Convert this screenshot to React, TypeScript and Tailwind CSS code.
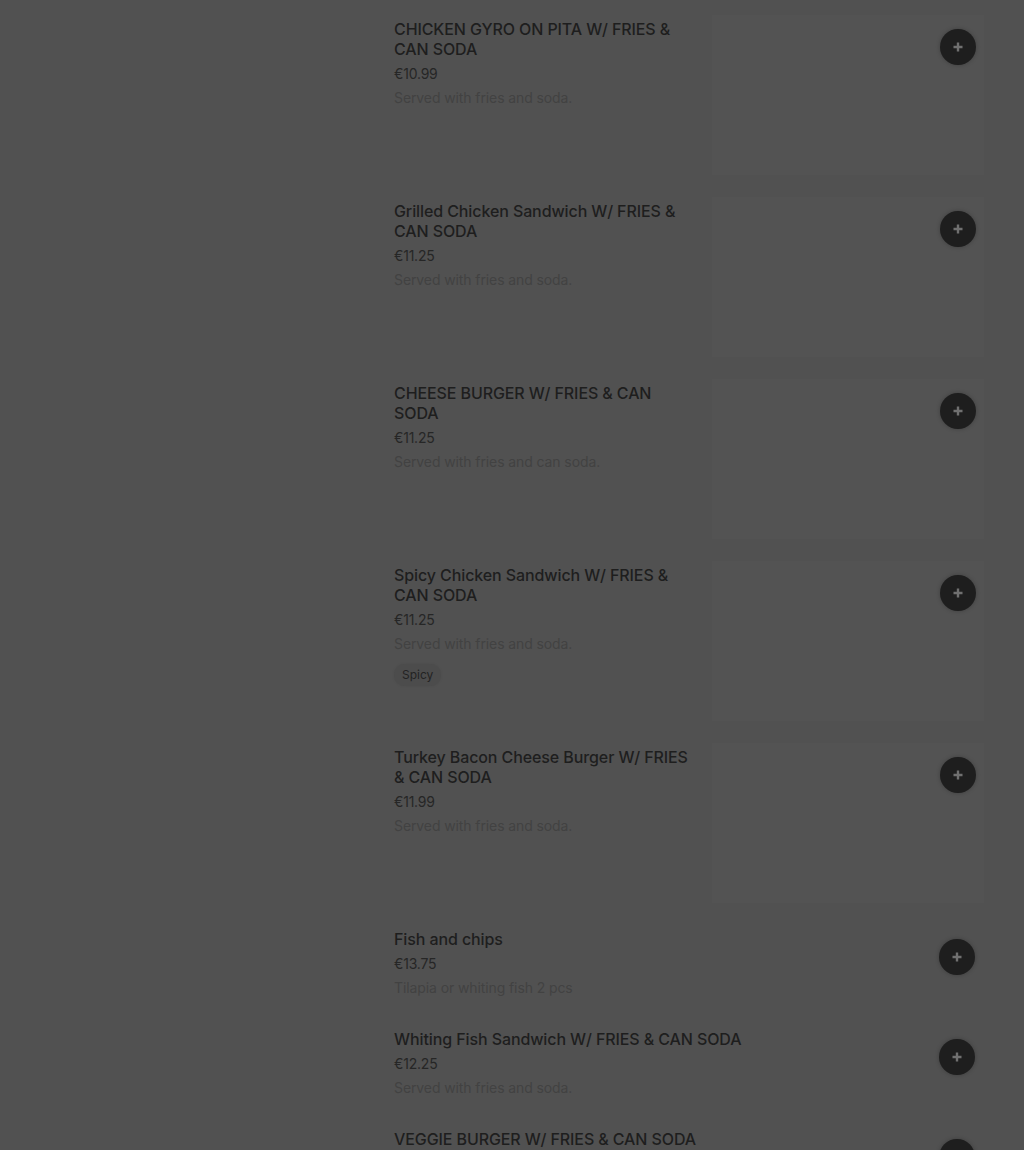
import React from 'react';

interface MenuItem {
  name: string;
  price: string;
  description: string;
  tags?: string[];
  image?: boolean;
}

const items: MenuItem[] = [
  { name: 'CHICKEN GYRO ON PITA W/ FRIES & CAN SODA', price: '€10.99', description: 'Served with fries and soda.', image: true },
  { name: 'Grilled Chicken Sandwich W/ FRIES & CAN SODA', price: '€11.25', description: 'Served with fries and soda.', image: true },
  { name: 'CHEESE BURGER W/ FRIES & CAN SODA', price: '€11.25', description: 'Served with fries and can soda.', image: true },
  { name: 'Spicy Chicken Sandwich W/ FRIES & CAN SODA', price: '€11.25', description: 'Served with fries and soda.', tags: ['Spicy'], image: true },
  { name: 'Turkey Bacon Cheese Burger W/ FRIES & CAN SODA', price: '€11.99', description: 'Served with fries and soda.', image: true },
  { name: 'Fish and chips', price: '€13.75', description: 'Tilapia or whiting fish 2 pcs' },
  { name: 'Whiting Fish Sandwich W/ FRIES & CAN SODA', price: '€12.25', description: 'Served with fries and soda.' },
  { name: 'VEGGIE BURGER W/ FRIES & CAN SODA', price: '€12.25', description: 'Served with fries and soda.' },
];

const AddButton = () => (
  <button className="w-9 h-9 rounded-full bg-[#1e1e1e] flex items-center justify-center shadow-[0_0_4px_rgba(0,0,0,0.25)]">
    <svg width="12" height="12" viewBox="0 0 12 12">
      <path d="M6 1.5v9M1.5 6h9" stroke="#707070" strokeWidth="2.4" />
    </svg>
  </button>
);

const MenuRow = ({ item }: { item: MenuItem }) => {
  return (
    <div className={`flex items-start ${item.image ? 'h-[182px]' : 'h-[100px]'}`}>
      <div className={`pt-[19px] ${item.image ? 'w-[304px]' : 'flex-1'}`}>
        <h3 className="text-[16px] leading-[20px] font-medium tracking-[-0.1px] text-[#1e1e1e]">{item.name}</h3>
        <p className="mt-[5px] text-[14px] leading-[20px] tracking-[-0.2px] text-[#262626]">{item.price}</p>
        <p className="mt-[4px] text-[14px] leading-[20px] tracking-[-0.1px] text-[#424242]">{item.description}</p>
        {item.tags && (
          <div className="mt-[10px] flex gap-2">
            {item.tags.map((tag) => (
              <span
                key={tag}
                className="px-2 h-[22px] flex items-center rounded-full bg-[#4c4c4c] text-[12px] text-[#232323] shadow-[0_0_3px_rgba(0,0,0,0.08)]"
              >
                {tag}
              </span>
            ))}
          </div>
        )}
      </div>
      {item.image ? (
        <div className="ml-[14px] mt-[15px] w-[272px] h-[160px] bg-[#535353] flex justify-end items-start pt-[14px] pr-[8px]">
          <AddButton />
        </div>
      ) : (
        <div className="mt-[29px] mr-[10px]">
          <AddButton />
        </div>
      )}
    </div>
  );
};

const App = () => {
  return (
    <div
      className="min-h-[1150px] h-[1150px] overflow-hidden bg-[#515151]"
      style={{ fontFamily: 'Inter, "Noto Sans", sans-serif' }}
    >
      <main className="pl-[394px] pr-[39px]">
        {items.map((item) => (
          <MenuRow key={item.name} item={item} />
        ))}
      </main>
    </div>
  );
};

export default App;
